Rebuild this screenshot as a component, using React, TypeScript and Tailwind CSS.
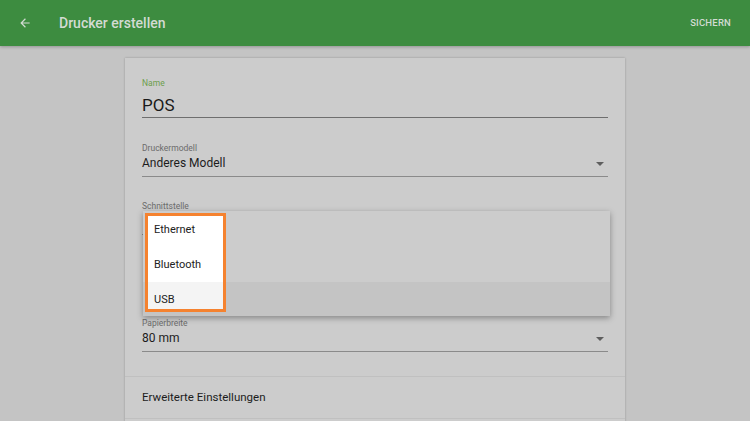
import React from 'react';

const ArrowDown = () => (
    <svg width="8" height="4" viewBox="0 0 10 5" className="shrink-0">
        <path d="M0 0l5 5 5-5z" fill="#5e5e5e" />
    </svg>
);

const FieldLabel: React.FC<{ text: string; color?: string }> = ({ text, color = 'text-[#6b6b6b]' }) => (
    <div className={`text-[8.5px] leading-[10px] ${color}`}>{text}</div>
);

const SelectValue: React.FC<{ value?: string }> = ({ value }) => (
    <div className="flex items-start justify-between h-[24px] pt-[2px] border-b border-[#8a8a8a] pr-[4px]">
        <span className="text-[12px] leading-[16px] text-[#1c1c1c]">{value}</span>
        <span className="mt-[7px]">
            <ArrowDown />
        </span>
    </div>
);

const menuRows = [
    { label: 'Ethernet', h: 'h-[35px]', bg: 'bg-white' },
    { label: 'Bluetooth', h: 'h-[36px]', bg: 'bg-white' },
    { label: 'USB', h: 'h-[34px]', bg: 'bg-[#f4f4f4]' },
];

export default function App() {
    return (
        <div className="w-[750px] h-[421px] overflow-hidden bg-[#c4c4c4] font-['Roboto',sans-serif]">
            {/* App bar */}
            <div className="h-[46px] bg-[#3d8c40] flex items-center px-[18px] shadow-[0_1px_3px_rgba(0,0,0,0.25)] relative z-10">
                <svg width="14" height="14" viewBox="0 0 24 24" className="shrink-0">
                    <path d="M20 11H7.83l5.59-5.59L12 4l-8 8 8 8 1.41-1.41L7.83 13H20v-2z" fill="#d3dbd3" />
                </svg>
                <div className="ml-[27px] text-[14px] font-medium text-[#d3dbd3]">Drucker erstellen</div>
                <div className="ml-auto mr-[1px] text-[9.5px] font-medium tracking-[0.2px] text-[#d3dbd3]">SICHERN</div>
            </div>

            {/* Card */}
            <div className="relative mx-auto mt-[12px] w-[500px] bg-[#cccccc] shadow-[0_0_2px_rgba(0,0,0,0.25)]">
                <div className="px-[17px] pt-[20px]">
                    <FieldLabel text="Name" color="text-[#6c9e4c]" />
                    <div className="h-[30px] flex items-end pb-[2px] border-b-[1.5px] border-[#6e6e6e]">
                        <span className="text-[17px] leading-[20px] text-[#1a1a1a]">POS</span>
                    </div>

                    <div className="mt-[25px]">
                        <FieldLabel text="Druckermodell" />
                        <SelectValue value="Anderes Modell" />
                    </div>

                    {/* value hidden below the open menu */}
                    <div className="mt-[24px]">
                        <FieldLabel text="Schnittstelle" />
                        <SelectValue />
                    </div>

                    <div className="mt-[83px]">
                        <FieldLabel text="Papierbreite" />
                        <SelectValue value="80 mm" />
                    </div>
                </div>

                <div className="mt-[24px] border-t border-[#c0c0c0] h-[42px] flex items-center px-[17px]">
                    <span className="text-[11.5px] text-[#1c1c1c]">Erweiterte Einstellungen</span>
                </div>
                <div className="border-t border-[#c0c0c0] h-[10px]" />

                {/* Open dropdown menu */}
                <div className="absolute left-[18px] top-[153px] w-[467px] bg-[#cccccc] shadow-[0_2px_6px_rgba(0,0,0,0.35)]">
                    <div className="h-[35px]" />
                    <div className="h-[36px]" />
                    <div className="h-[34px] bg-[#c4c4c4]" />

                    {/* Highlight */}
                    <div className="absolute left-[2px] top-[2px] w-[81px] h-[99px] border-[3px] border-[#f5822f] overflow-hidden">
                        <div className="-mt-[5px] flex flex-col">
                            {menuRows.map((r) => (
                                <div key={r.label} className={`${r.h} ${r.bg} flex items-center px-[6px] pt-[3px] text-[11px] text-[#222]`}>
                                    {r.label}
                                </div>
                            ))}
                        </div>
                    </div>
                </div>
            </div>
        </div>
    );
}
